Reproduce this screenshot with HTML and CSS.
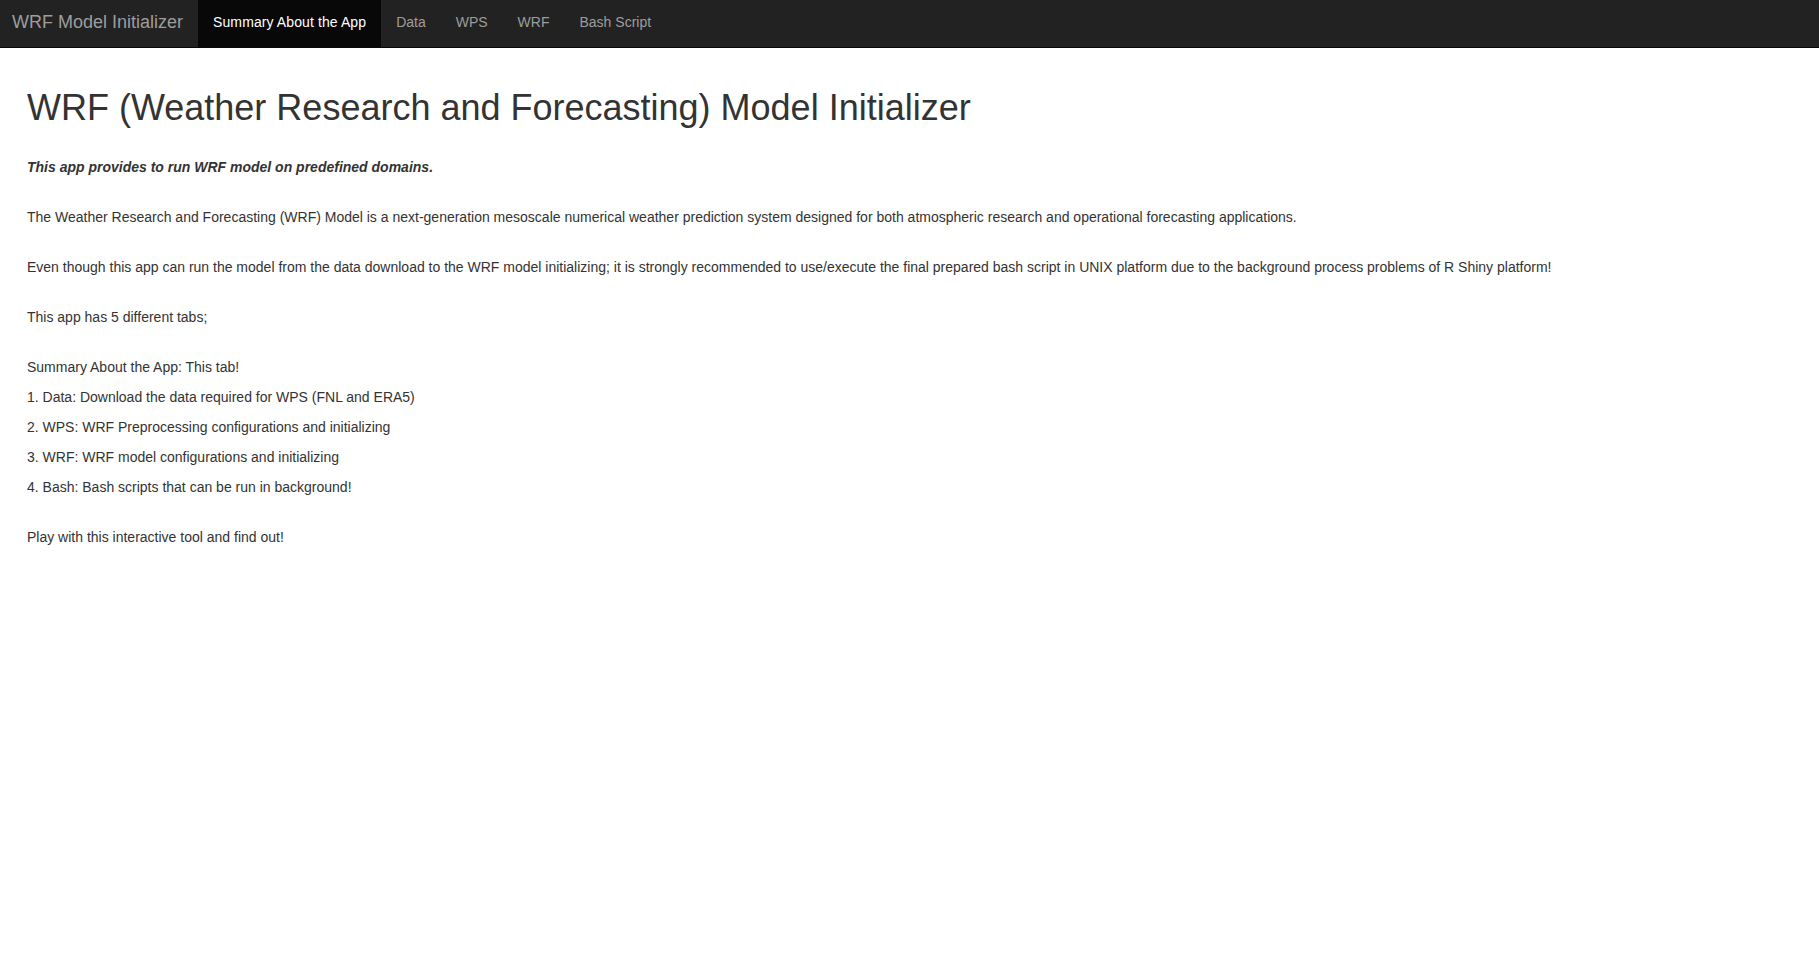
FILE: index.html
```html
<!DOCTYPE html>
<html lang="en">
<head>
<meta charset="utf-8">
<title>WRF Model Initializer</title>
<link rel="stylesheet" href="styles.css">
</head>
<body>
<nav class="navbar">
  <span class="brand">WRF Model Initializer</span>
  <ul class="nav">
    <li class="active"><a>Summary About the App</a></li>
    <li><a>Data</a></li>
    <li><a>WPS</a></li>
    <li><a>WRF</a></li>
    <li><a>Bash Script</a></li>
  </ul>
</nav>
<main class="content">
  <h1>WRF (Weather Research and Forecasting) Model Initializer</h1>
  <p class="lead"><strong><em>This app provides to run WRF model on predefined domains.</em></strong></p>
  <p class="gap">The Weather Research and Forecasting (WRF) Model is a next-generation mesoscale numerical weather prediction system designed for both atmospheric research and operational forecasting applications.</p>
  <p class="gap">Even though this app can run the model from the data download to the WRF model initializing; it is strongly recommended to use/execute the final prepared bash script in UNIX platform due to the background process problems of R Shiny platform!</p>
  <p class="gap">This app has 5 different tabs;</p>
  <p>Summary About the App: This tab!</p>
  <p>1. Data: Download the data required for WPS (FNL and ERA5)</p>
  <p>2. WPS: WRF Preprocessing configurations and initializing</p>
  <p>3. WRF: WRF model configurations and initializing</p>
  <p class="gap">4. Bash: Bash scripts that can be run in background!</p>
  <p>Play with this interactive tool and find out!</p>
</main>
</body>
</html>
```
FILE: styles.css
```css
html, body {
  margin: 0;
  padding: 0;
  background: #fff;
}
body {
  font-family: "Liberation Sans", Arial, sans-serif;
  font-size: 14px;
  line-height: 20px;
  color: #333;
}
.navbar {
  display: flex;
  align-items: stretch;
  height: 47px;
  background: #222;
  border-bottom: 1px solid #080808;
}
.brand {
  padding: 12px 15px 0 12px;
  font-size: 18px;
  line-height: 20px;
  color: #9d9d9d;
}
.nav {
  display: flex;
  list-style: none;
  margin: 0;
  padding: 0;
}
.nav li {
  display: flex;
}
.nav a {
  display: block;
  padding: 12px 15px 0;
  line-height: 20px;
  color: #9d9d9d;
  font-size: 14px;
}
.nav li.active a {
  background: #080808;
  color: #fff;
  letter-spacing: 0.1px;
}
.content {
  padding: 0 27px;
}
h1 {
  font-size: 36px;
  font-weight: 500;
  line-height: 40px;
  margin: 40px 0 29px;
  color: #333;
}
p {
  margin: 0 0 10px;
}
p.lead {
  margin-bottom: 30px;
}
p.gap {
  margin-bottom: 30px;
}
```
